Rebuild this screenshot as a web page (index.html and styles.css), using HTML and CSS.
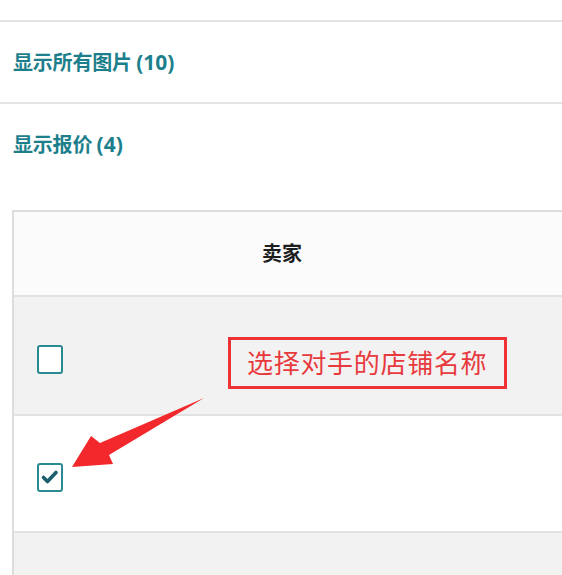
FILE: index.html
```html
<!DOCTYPE html>
<html lang="zh">
<head>
<meta charset="utf-8">
<title>卖家</title>
<link rel="stylesheet" href="styles.css">
</head>
<body>
<div class="page">
  <div class="topbar"></div>
  <div class="link-row first"><a class="link">显示所有图片 <span class="num">(10)</span></a></div>
  <div class="link-row second"><a class="link">显示报价 <span class="num">(4)</span></a></div>
  <div class="table">
    <div class="thead"><div class="th">卖家</div></div>
    <div class="row gray"><span class="checkbox"></span></div>
    <div class="row white"><span class="checkbox checked">
      <svg viewBox="0 0 26 28" width="26" height="28"><path d="M6.5 14.5 L10.5 18.5 L19 9.5" fill="none" stroke="#1b5f6c" stroke-width="3.6" stroke-linecap="round" stroke-linejoin="round"/></svg>
    </span></div>
    <div class="row gray last"></div>
  </div>
  <div class="callout">选择对手的店铺名称</div>
  <svg class="arrow" width="562" height="575" viewBox="0 0 562 575">
    <polygon points="72,467 91,436 100,443 204,398 109,455 113,464" fill="#f2282c"/>
  </svg>
</div>
</body>
</html>
```
FILE: styles.css
```css
html, body {
  margin: 0;
  padding: 0;
  background: #ffffff;
  overflow: hidden;
}
.page {
  position: relative;
  width: 562px;
  height: 575px;
  overflow: hidden;
  font-family: "Noto Sans CJK SC", "Noto Sans", sans-serif;
}
.topbar {
  height: 20px;
  border-bottom: 2px solid #e3e3e3;
}
.link-row {
  padding-left: 13px;
  line-height: 24px;
}
.link-row.first {
  padding-top: 28px;
  padding-bottom: 27px;
  border-bottom: 2px solid #e3e3e3;
}
.link-row.second {
  padding-top: 28px;
  padding-bottom: 53px;
}
.link {
  color: #1e7f8c;
  font-size: 20px;
  font-weight: 700;
  letter-spacing: -0.2px;
}
.num {
  font-family: "Open Sans", "Noto Sans", sans-serif;
  font-weight: 700;
  font-size: 21px;
  letter-spacing: 0;
}
.table {
  margin-left: 12px;
  width: 600px;
  border-left: 2px solid #dddddd;
  border-top: 2px solid #dddddd;
}
.thead {
  height: 83px;
  background: #fbfbfb;
  border-bottom: 2px solid #e2e2e2;
}
.th {
  width: 536px;
  line-height: 81px;
  text-align: center;
  font-size: 20px;
  font-weight: 700;
  color: #1e1e1e;
}
.row {
  box-sizing: border-box;
  padding-left: 23px;
  border-bottom: 2px solid #e2e2e2;
}
.row.gray {
  height: 119px;
  padding-top: 48px;
  background: #f2f2f2;
}
.row.white {
  height: 117px;
  padding-top: 47px;
  background: #ffffff;
}
.row.last {
  height: 60px;
  border-bottom: none;
}
.checkbox {
  display: block;
  box-sizing: border-box;
  width: 26px;
  height: 29px;
  border: 2.5px solid #2a8a94;
  border-radius: 3px;
  background: #ffffff;
  position: relative;
}
.checkbox svg {
  position: absolute;
  left: -2.5px;
  top: -2.5px;
}
.callout {
  position: absolute;
  left: 228px;
  top: 337px;
  width: 279px;
  height: 52px;
  box-sizing: border-box;
  border: 3.5px solid #ef3236;
  color: #e83a3e;
  font-size: 26px;
  line-height: 44px;
  padding-left: 16px;
  letter-spacing: 0.7px;
  white-space: nowrap;
}
.arrow {
  position: absolute;
  left: 0;
  top: 0;
  pointer-events: none;
}
```
